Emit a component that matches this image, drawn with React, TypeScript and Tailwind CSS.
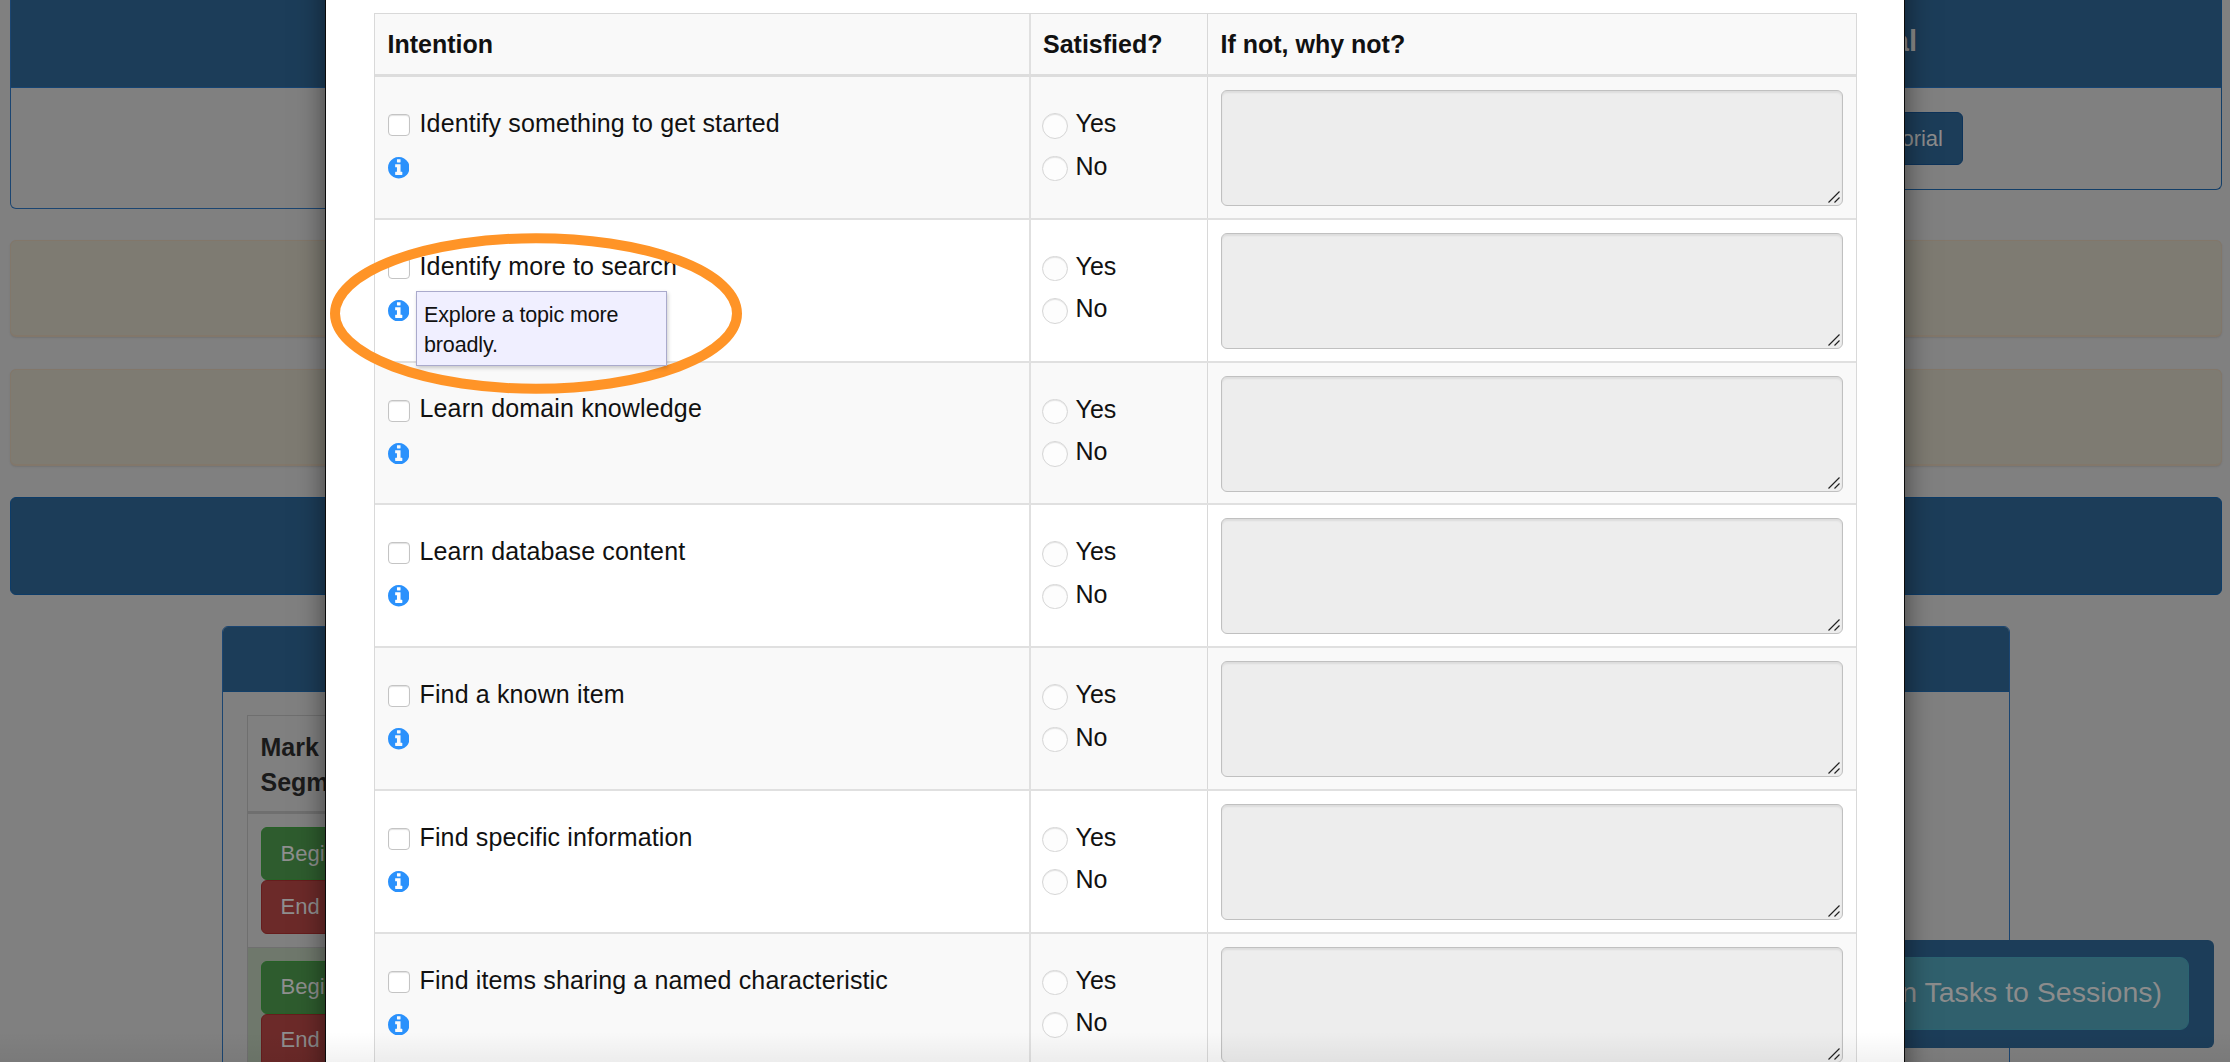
const rows = [
  'Identify something to get started',
  'Identify more to search',
  'Learn domain knowledge',
  'Learn database content',
  'Find a known item',
  'Find specific information',
  'Find items sharing a named characteristic',
];

function InfoIcon() {
  return (
    <svg viewBox="128 128 1536 1536" className="block size-[21.5px] fill-[#2a91fc]">
      <path d="M1152 1376v-160q0-14-9-23t-23-9h-96v-512q0-14-9-23t-23-9h-320q-14 0-23 9t-9 23v160q0 14 9 23t23 9h96v320h-96q-14 0-23 9t-9 23v160q0 14 9 23t23 9h448q14 0 23-9t9-23zm-128-896v-160q0-14-9-23t-23-9h-192q-14 0-23 9t-9 23v160q0 14 9 23t23 9h192q14 0 23-9t9-23zm640 416q0 209-103 385.5t-279.5 279.5-385.5 103-385.5-103-279.5-279.5-103-385.5 103-385.5 279.5-279.5 385.5-103 385.5 103 279.5 279.5 103 385.5z" />
    </svg>
  );
}

function Radio({ label }: { label: string }) {
  return (
    <div className="flex h-[42.5px] items-start gap-2">
      <span className="mt-[7px] size-[25.5px] shrink-0 rounded-full border border-[#d6d6d6] bg-[#fdfdfd] shadow-[inset_0_1px_1px_rgba(0,0,0,0.1)]" />
      <span className="leading-[35px]">{label}</span>
    </div>
  );
}

function Row({ label, index }: { label: string; index: number }) {
  return (
    <div
      className={
        'grid h-[142.8px] grid-cols-[654px_178px_1fr] border-b-2 border-[#e0e0e0] ' +
        (index % 2 === 0 ? 'bg-[#f9f9f9]' : 'bg-white')
      }
    >
      <div className="flex flex-col pt-[29px] pl-[12.5px]">
        <div className="flex h-[35px] items-center gap-[10px]">
          <span className="mt-[3px] size-[22px] shrink-0 rounded-[4px] border border-[#c4c4c4] bg-white shadow-[inset_0_1px_1px_rgba(0,0,0,0.12)]" />
          <span className="tracking-[0.14px] whitespace-nowrap">{label}</span>
        </div>
        <div className="relative mt-[16px] w-[22px]">
          <InfoIcon />
          {index === 1 && (
            <div className="absolute top-[-8.5px] left-[28.5px] z-10 h-[75px] w-[251px] border border-[#aaaacc] bg-[#f0efff] pt-[7.5px] pl-[7px] text-[21.5px] leading-[30px] tracking-[-0.14px] shadow-[1px_2px_4px_rgba(0,0,0,0.2)]">
              Explore a topic more
              <br />
              broadly.
            </div>
          )}
        </div>
      </div>
      <div className="border-l-2 border-[#e0e0e0] pt-[29px] pl-[11px]">
        <Radio label="Yes" />
        <Radio label="No" />
      </div>
      <div className="border-l border-[#d8d8d8] pt-[13px] pr-[13px] pl-[13px]">
        <div className="flex h-[116px] items-end justify-end rounded-[6px] border border-[#c0c0c0] bg-[#ededed] p-[2px] shadow-[inset_0_2px_2px_rgba(0,0,0,0.07)]">
          <svg viewBox="0 0 12 12" className="size-3 stroke-[#222222]" strokeWidth="1.2" fill="none">
            <path d="M0.5 11.5L11.5 0.5M6.5 11.5L11.5 6.5" />
          </svg>
        </div>
      </div>
    </div>
  );
}

function SegmentButtons() {
  return (
    <div className="flex h-[133.5px] flex-col items-start border-b border-[#6f6f6f] pt-[13px] pl-[12.5px] text-[22px] text-[#8f8f8f]">
      <span className="flex h-[53.3px] items-center rounded-[6px] border border-[#266126] bg-[#2e5c2e] px-[19px] pb-px">Begin</span>
      <span className="flex h-[53.3px] items-center rounded-[6px] border border-[#661d1d] bg-[#6c2a29] px-[19px] pb-px">End Segment</span>
    </div>
  );
}

function Backdrop() {
  return (
    <div className="flex flex-col pr-[8px] pl-[10px]">
      <div className="flex h-[209px] items-start gap-8">
        <section className="h-[209px] flex-1 rounded-b-[6px] border border-t-0 border-[#1b4571]">
          <div className="h-[88px] border-b border-[#164472] bg-[#1c3d59]" />
        </section>
        <section className="h-[190px] flex-1 rounded-b-[6px] border border-t-0 border-[#123e68]">
          <div className="h-[88px] border-b border-[#164472] bg-[#1c3d59] pt-[23px] pr-[304px] text-right text-[29px] leading-[36px] font-bold text-[#8c8c8c]">
            Tutorial
          </div>
          <div className="flex justify-end pt-[24px] pr-[258px]">
            <span className="flex h-[53px] items-center rounded-[6px] border border-[#0d335a] bg-[#1c3d59] px-[19px] pb-px text-[22px] text-[#8c8c8c]">
              View Tutorial
            </span>
          </div>
        </section>
      </div>
      <div className="mt-[31px] h-[97px] rounded-[6px] border border-b-2 border-[#82776a] bg-[#7e7b72] shadow-[0_1px_2px_rgba(0,0,0,0.1)]" />
      <div className="mt-[32px] h-[97px] rounded-[6px] border border-b-2 border-[#82776a] bg-[#7e7b72] shadow-[0_1px_2px_rgba(0,0,0,0.1)]" />
      <div className="mt-[31px] h-[98px] rounded-[6px] border border-[#0d3c68] bg-[#1c3d59]" />
      <section className="mt-[31px] mr-[212px] ml-[211.5px] h-[440px] rounded-t-[6px] border border-[#1b4571]">
        <div className="h-[65px] rounded-t-[5px] border-b border-[#133f68] bg-[#1c3d59]" />
        <div className="mt-[23px] ml-[24.5px] w-[600px] border border-[#6f6f6f] text-[25px]">
          <div className="h-[98px] border-b-[3px] border-[#6f6f6f] pt-[14px] pl-[12.5px] leading-[34.5px] font-bold text-[#1a1a1a]">
            Mark
            <br />
            Segment
          </div>
          <SegmentButtons />
          <div className="bg-[#6f786c]">
            <SegmentButtons />
          </div>
        </div>
      </section>
    </div>
  );
}

export default function App() {
  return (
    <div className="relative h-[1062px] w-[2230px] overflow-hidden bg-[#808080] font-['Liberation_Sans',Arial,sans-serif] text-[25px] text-[#111111]">
      <Backdrop />

      <div className="absolute top-[940px] right-[16px] flex h-[108px] w-[900px] items-start justify-end rounded-[6px] bg-[#1c3d59] pt-[17px] pr-[25px]">
        <span className="flex h-[72.5px] items-center rounded-[9px] border border-[#2b6371] bg-[#30606d] pr-[26px] pb-px pl-7 text-[28.5px] whitespace-nowrap text-[#8c8c8c]">
          (Assign Tasks to Sessions)
        </span>
      </div>

      <div className="absolute -top-10 left-[325px] h-[1200px] w-[1580px] border border-[#0a0a0a] bg-white pt-[52px] pr-[47px] pl-[48px] shadow-[0_9px_27px_rgba(0,0,0,0.5)]">
        <div className="border border-[#d9d9d9]">
          <div className="grid h-[63px] grid-cols-[654px_178px_1fr] border-b-[3px] border-[#dddddd] bg-[#f9f9f9] font-bold">
            <div className="pt-[15px] pl-[12.5px] leading-[30px]">Intention</div>
            <div className="border-l-2 border-[#e0e0e0] pt-[15px] pl-[12px] leading-[30px]">Satisfied?</div>
            <div className="border-l border-[#d8d8d8] pt-[15px] pl-[12.5px] leading-[30px]">If not, why not?</div>
          </div>
          {rows.map((label, i) => (
            <Row key={label} label={label} index={i} />
          ))}
        </div>
      </div>

      <svg viewBox="0 0 412 162" className="absolute top-[233px] left-[330px] h-[162px] w-[412px]">
        <ellipse cx="206" cy="80.5" rx="201" ry="75.3" fill="none" stroke="#ff9427" strokeWidth="10" />
      </svg>

      <div className="absolute inset-x-0 bottom-0 h-[30px] bg-linear-to-b from-black/0 to-black/5" />
    </div>
  );
}
